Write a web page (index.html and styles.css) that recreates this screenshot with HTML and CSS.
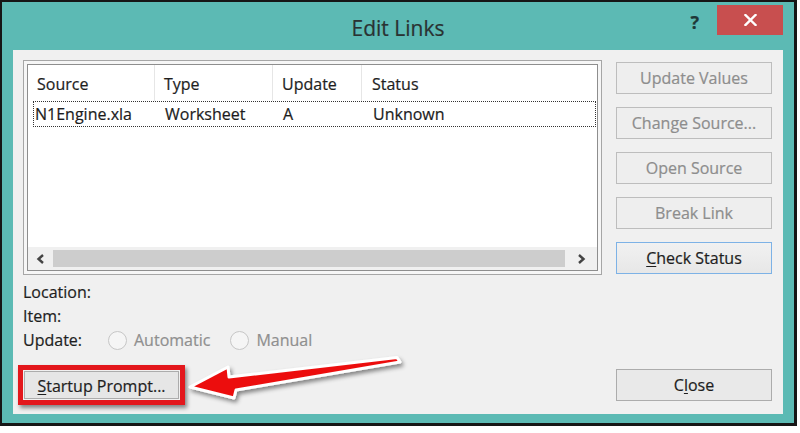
FILE: index.html
```html
<!DOCTYPE html>
<html>
<head>
<meta charset="utf-8">
<link rel="stylesheet" href="styles.css">
</head>
<body>
<div class="window">
  <div class="titlebar">
    <div></div>
    <div class="title">Edit Links</div>
    <div class="controls">
      <span class="help">?</span>
      <div class="closebox">
        <svg width="13" height="12" viewBox="0 0 13 12"><path d="M1.5 1 L11.5 11 M11.5 1 L1.5 11" stroke="#fff" stroke-width="2.4" stroke-linecap="square"/></svg>
      </div>
    </div>
  </div>
  <div class="content">
    <div class="left">
      <div class="listframe">
        <div class="list">
          <div class="hdr">
            <div class="hc h1">Source</div>
            <div class="hc h2">Type</div>
            <div class="hc h3">Update</div>
            <div class="hc h4">Status</div>
          </div>
          <div class="item">
            <div class="ic i1">N1Engine.xla</div>
            <div class="ic i2">Worksheet</div>
            <div class="ic i3">A</div>
            <div class="ic i4">Unknown</div>
          </div>
          <div class="spacer"></div>
          <div class="hscroll">
            <div class="sarrow sleft"><svg width="10" height="10" viewBox="0 0 10 10"><polyline points="7,1 2.5,5 7,9" fill="none" stroke="#444" stroke-width="2.4"/></svg></div>
            <div class="thumb"></div>
            <div class="sarrow sright"><svg width="10" height="10" viewBox="0 0 10 10"><polyline points="3,1 7.5,5 3,9" fill="none" stroke="#444" stroke-width="2.4"/></svg></div>
          </div>
        </div>
      </div>
      <div class="info">
        <div class="line">Location:</div>
        <div class="line">Item:</div>
        <div class="line upd">
          <span class="lbl">Update:</span>
          <span class="radio"></span><span class="rtext">Automatic</span>
          <span class="radio r2"></span><span class="rtext">Manual</span>
        </div>
      </div>
      <div class="highlight">
        <div class="btn startup"><u>S</u>tartup Prompt...</div>
      </div>
    </div>
    <div class="right">
      <div class="btn side disabled">Update Values</div>
      <div class="btn side disabled">Change Source...</div>
      <div class="btn side disabled">Open Source</div>
      <div class="btn side disabled">Break Link</div>
      <div class="btn side focus"><u>C</u>heck Status</div>
      <div class="btn side closebtn">C<u>l</u>ose</div>
    </div>
  </div>
</div>
<svg class="arrow" width="800" height="433" viewBox="0 0 800 433">
  <defs>
    <filter id="sh" x="-20%" y="-50%" width="140%" height="200%">
      <feDropShadow dx="2" dy="3" stdDeviation="2" flood-color="#000" flood-opacity="0.45"/>
    </filter>
  </defs>
  <polygon points="190,387 228,367 229,377 397,357.5 400,362 236,390 234,398" fill="#ec1010" stroke="#fff" stroke-width="3" stroke-linejoin="round" filter="url(#sh)"/>
</svg>
</body>
</html>
```

FILE: styles.css
```css
body {
  margin: 0;
  background: #fff;
  font-family: "Open Sans", "Noto Sans", sans-serif;
  font-size: 16px;
  color: #1c1c1c;
  position: relative;
  width: 800px;
  height: 433px;
  overflow: hidden;
  -webkit-text-stroke: 0.2px;
}

.window {
  width: 797px;
  height: 426px;
  box-sizing: border-box;
  border-style: solid;
  border-color: #161616;
  border-width: 2px 3px 3px 2px;
  background: #5cbab4;
  display: flex;
  flex-direction: column;
}

.titlebar {
  height: 48px;
  flex: none;
  display: grid;
  grid-template-columns: 1fr auto 1fr;
  align-items: start;
}

.title {
  font-size: 21px;
  line-height: 28px;
  padding-top: 12px;
  color: #2a3232;
}

.controls {
  justify-self: end;
  display: flex;
  align-items: flex-start;
}

.help {
  font-weight: 700;
  font-size: 18px;
  line-height: 24px;
  margin-top: 8px;
  margin-right: 18px;
  color: #1f3838;
}

.closebox {
  width: 66px;
  height: 30px;
  margin-top: 3px;
  margin-right: 11px;
  background: #c84f4f;
  display: flex;
  align-items: center;
  justify-content: center;
}

.closebox svg { display: block; }

.content {
  flex: 1;
  margin: 0 11px 9px 11px;
  background: #f0f0f0;
  display: flex;
  gap: 14px;
  padding: 10px 11px 9px 10px;
}

.left {
  width: 579px;
  display: flex;
  flex-direction: column;
}

.listframe {
  height: 215px;
  box-sizing: border-box;
  border: 1px solid #a6a6a6;
  padding: 3px;
  background: #f6f6f6;
}

.list {
  height: 100%;
  box-sizing: border-box;
  border: 1px solid #8e8e8e;
  background: #fff;
  display: flex;
  flex-direction: column;
}

.hdr {
  height: 36px;
  display: grid;
  grid-template-columns: 127px 118px 89px 1fr;
  flex: none;
}

.hc {
  display: flex;
  align-items: center;
  padding-top: 2px;
  box-sizing: border-box;
  color: #1e1e1e;
}

.h1 { padding-left: 9px; border-right: 1px solid #e6e6e6; }
.h2 { padding-left: 9px; border-right: 1px solid #e6e6e6; }
.h3 { padding-left: 9px; border-right: 1px solid #e6e6e6; }
.h4 { padding-left: 10px; }

.item {
  height: 26px;
  box-sizing: border-box;
  margin: 0 1px 0 5px;
  border: 1px dotted #333;
  display: grid;
  grid-template-columns: 121px 118px 89px 1fr;
  align-items: center;
  flex: none;
}

.ic { line-height: 22px; }
.i1 { padding-left: 1px; }
.i2 { padding-left: 10px; }
.i3 { padding-left: 10px; }
.i4 { padding-left: 11px; }

.spacer { flex: 1; }

.hscroll {
  height: 23px;
  flex: none;
  background: #f0f0f0;
  display: flex;
  align-items: stretch;
}

.sarrow {
  display: flex;
  align-items: center;
  justify-content: center;
}

.sleft { width: 25px; }
.sright { width: 32px; }

.thumb {
  flex: 1;
  margin: 3px 0;
  background: #cdcdcd;
}

.info {
  margin-top: 5px;
  line-height: 24px;
  color: #1e1e1e;
}

.upd {
  display: flex;
  align-items: center;
}

.lbl { width: 85px; }

.radio {
  width: 17px;
  height: 17px;
  border: 1px solid #c6c6c6;
  border-radius: 50%;
  background: #f5f5f5;
  margin-right: 7px;
}

.r2 { margin-left: 20px; }

.rtext { color: #8f8f8f; }

.highlight {
  margin-top: 13px;
  margin-left: -5px;
  width: 167px;
  height: 40px;
  box-sizing: border-box;
  border: 5px solid #e3171c;
  padding: 1px;
  box-shadow: 2px 3px 4px rgba(0, 0, 0, 0.45);
}

.btn {
  box-sizing: border-box;
  display: flex;
  align-items: center;
  justify-content: center;
  border: 1px solid #acacac;
  background: linear-gradient(#f0f0f0, #e5e5e5);
  color: #1e1e1e;
}

.btn u { text-underline-offset: 2px; }

.startup {
  height: 28px;
  background: #e6e6e6;
  padding-top: 1px;
}

.right {
  width: 156px;
  display: flex;
  flex-direction: column;
  gap: 13px;
  padding-top: 2px;
}

.side { height: 32px; }

.disabled {
  color: #8d8d8d;
  border-color: #bdbdbd;
  background: #eeeeee;
}

.focus {
  border-color: #7db2e6;
  background: linear-gradient(#f1f1f1, #e7e7e7);
}

.closebtn {
  margin-top: auto;
  margin-bottom: 4px;
  background: #e9e9e9;
}

.arrow {
  position: absolute;
  left: 0;
  top: 0;
  pointer-events: none;
}
```
